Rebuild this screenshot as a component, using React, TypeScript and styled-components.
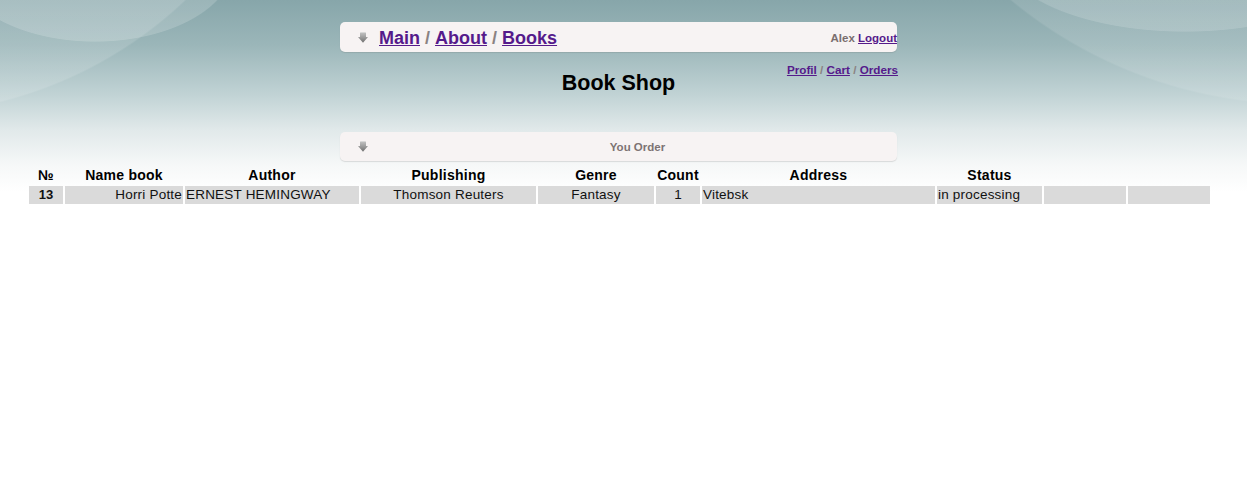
import React from "react";
import styled, { createGlobalStyle } from "styled-components";

const GlobalStyle = createGlobalStyle`
  html, body { margin: 0; padding: 0; background: #ffffff; }
  body { font-family: "Liberation Sans", Arial, sans-serif; color: #000; }
`;

const Page = styled.div`
  min-height: 478px;
  padding-top: 22px;
  box-sizing: border-box;
  background:
    radial-gradient(140px 80px at 95px -38px, rgba(255,255,255,0.17) 0 99%, rgba(255,255,255,0) 100%),
    radial-gradient(circle 415px at -100px -300px, rgba(255,255,255,0.13) 0 99.6%, rgba(255,255,255,0) 100%),
    radial-gradient(185px 80px at 1185px -48px, rgba(255,255,255,0.15) 0 99%, rgba(255,255,255,0) 100%),
    radial-gradient(circle 455px at 1300px -350px, rgba(255,255,255,0.11) 0 99.6%, rgba(255,255,255,0) 100%),
    linear-gradient(180deg, #87a6aa 0px, #9bb6b9 45px, #c1d3d5 95px, #e1e9ea 130px, #f6f8f8 165px, #ffffff 192px);
  background-repeat: no-repeat;
`;

const Center = styled.div`
  display: flex;
  justify-content: center;
  padding-right: 10px;
`;

const Column = styled.div`
  width: 557px;
  display: flex;
  flex-direction: column;
`;

const Bar = styled.div<{ $h: number }>`
  height: ${(p) => p.$h}px;
  display: flex;
  align-items: center;
  background: #f7f3f3;
  border-radius: 5px;
  box-shadow: 0 1px 1px rgba(90, 90, 90, 0.18);
  padding-left: 18px;
`;

const Nav = styled.nav`
  margin: 2px 0 0 11px;
  font-size: 18px;
  font-weight: bold;
  color: #7a7272;
  display: flex;
`;

const Link = styled.a`
  color: #551a8b;
  text-decoration: underline;
  font-weight: bold;
  cursor: pointer;
`;

const Sep = styled.span`
  color: #8a8282;
  white-space: pre;
`;

const User = styled.div`
  margin-left: auto;
  font-size: 11.5px;
  font-weight: bold;
  color: #7a6e6e;
  white-space: pre;
  margin-top: 2px;
`;

const TitleRow = styled.div`
  display: grid;
  grid-template-columns: 1fr auto 1fr;
  margin-bottom: 37px;
`;

const Title = styled.h1`
  grid-column: 2;
  margin: 19px 0 0;
  font-size: 21.5px;
  line-height: 24px;
  font-weight: bold;
  color: #000;
`;

const SubLinks = styled.div`
  grid-column: 3;
  justify-self: end;
  align-self: start;
  margin: 11px -1px 0 0;
  font-size: 11.7px;
  line-height: 14px;
  font-weight: bold;
  color: #8a8282;
  white-space: pre;
`;

const BarLabel = styled.div`
  flex: 1;
  text-align: center;
  font-size: 11.5px;
  font-weight: bold;
  color: #7d7373;
  padding: 1px 0 0 10px;
`;

const TableWrap = styled.div`
  padding: 6px 0 0 29px;
`;

const Grid = styled.div`
  display: grid;
  grid-template-columns: 34px 118px 174px 175px 116px 44px 233px 105px 82px 82px;
  grid-template-rows: 17px 18px;
  column-gap: 2px;
  row-gap: 2px;
`;

const Head = styled.div`
  font-size: 14px;
  font-weight: bold;
  letter-spacing: 0.25px;
  text-align: center;
  line-height: 17px;
  white-space: nowrap;
`;

const Cell = styled.div<{ $align: "left" | "center" | "right"; $bold?: boolean }>`
  background: #dadada;
  font-size: ${(p) => (p.$bold ? 13 : 13.5)}px;
  letter-spacing: ${(p) => (p.$bold ? 0 : 0.2)}px;
  line-height: 18px;
  color: #111;
  text-align: ${(p) => p.$align};
  font-weight: ${(p) => (p.$bold ? "bold" : "normal")};
  padding: 0 ${(p) => (p.$align === "center" ? 0 : 1)}px;
  white-space: nowrap;
  overflow: hidden;
`;

const DownIcon = () => (
  <svg width="10" height="11" viewBox="0 0 10 11">
    <defs>
      <linearGradient id="dg" x1="0" y1="0" x2="0" y2="1">
        <stop offset="0" stopColor="#c2c2c2" />
        <stop offset="0.5" stopColor="#9a9a9a" />
        <stop offset="1" stopColor="#6e6e6e" />
      </linearGradient>
    </defs>
    <path d="M2.5 0.5 H7.5 Q8 0.5 8 1 V5 H10 L5 10.8 L0 5 H2 V1 Q2 0.5 2.5 0.5 Z" fill="url(#dg)" />
    <path d="M2.5 0.5 H7.5" stroke="#d8d8d8" strokeWidth="1" />
  </svg>
);

type Row = {
  id: string;
  name: string;
  author: string;
  publishing: string;
  genre: string;
  count: string;
  address: string;
  status: string;
};

const rows: Row[] = [
  {
    id: "13",
    name: "Horri Potte",
    author: "ERNEST HEMINGWAY",
    publishing: "Thomson Reuters",
    genre: "Fantasy",
    count: "1",
    address: "Vitebsk",
    status: "in processing",
  },
];

const headers = ["№", "Name book", "Author", "Publishing", "Genre", "Count", "Address", "Status", "", ""];

export default function App() {
  return (
    <Page>
      <GlobalStyle />
      <Center>
        <Column>
          <Bar $h={30}>
            <DownIcon />
            <Nav>
              <Link>Main</Link>
              <Sep> / </Sep>
              <Link>About</Link>
              <Sep> / </Sep>
              <Link>Books</Link>
            </Nav>
            <User>
              Alex <Link>Logout</Link>
            </User>
          </Bar>
          <TitleRow>
            <Title>Book Shop</Title>
            <SubLinks>
              <Link>Profil</Link>
              {" / "}
              <Link>Cart</Link>
              {" / "}
              <Link>Orders</Link>
            </SubLinks>
          </TitleRow>
          <Bar $h={29}>
            <DownIcon />
            <BarLabel>You Order</BarLabel>
          </Bar>
        </Column>
      </Center>
      <TableWrap>
        <Grid>
          {headers.map((h, i) => (
            <Head key={i}>{h}</Head>
          ))}
          {rows.map((r) => (
            <React.Fragment key={r.id}>
              <Cell $align="center" $bold>{r.id}</Cell>
              <Cell $align="right">{r.name}</Cell>
              <Cell $align="left">{r.author}</Cell>
              <Cell $align="center">{r.publishing}</Cell>
              <Cell $align="center">{r.genre}</Cell>
              <Cell $align="center">{r.count}</Cell>
              <Cell $align="left">{r.address}</Cell>
              <Cell $align="left">{r.status}</Cell>
              <Cell $align="left" />
              <Cell $align="left" />
            </React.Fragment>
          ))}
        </Grid>
      </TableWrap>
    </Page>
  );
}
